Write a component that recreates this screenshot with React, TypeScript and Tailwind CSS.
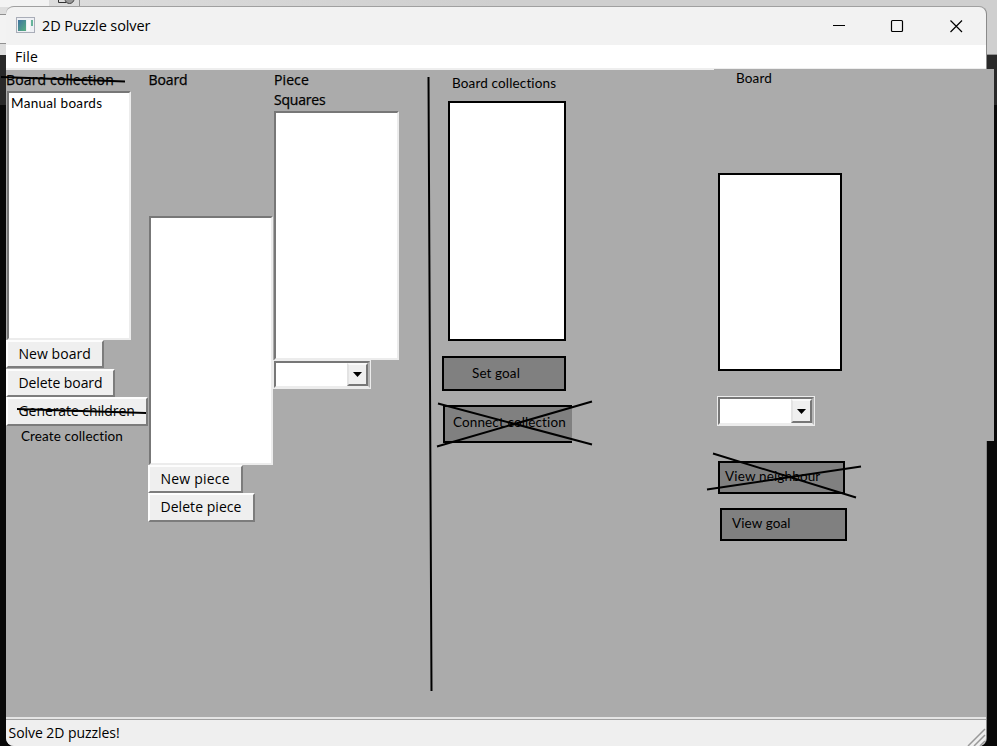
import React from "react";

const UI = "font-['Open_Sans','Noto_Sans',sans-serif] text-[14px] leading-5 whitespace-nowrap text-black";
const HEAD = "font-['Open_Sans','Noto_Sans',sans-serif] text-[14px] leading-5 whitespace-nowrap text-black [-webkit-text-stroke:0.25px_#000]";
const NOTE = "font-['Lato','Noto_Sans',sans-serif] text-[13.5px] leading-5 whitespace-nowrap text-black";

function ListBox({ size, children }: { size: string; children?: React.ReactNode }) {
  return (
    <div className={`border-2 border-t-[#777777] border-l-[#777777] border-r-[#ececec] border-b-[#ececec] bg-white ${size}`}>
      {children}
    </div>
  );
}

function Button({ size, children }: { size: string; children: React.ReactNode }) {
  return (
    <button className={`flex items-center border-2 border-t-[#fdfdfd] border-l-[#fdfdfd] border-r-[#7c7c7c] border-b-[#7c7c7c] bg-[#efefef] pb-px pl-[10.5px] ${UI} ${size}`}>
      {children}
    </button>
  );
}

function Combo({ size }: { size: string }) {
  return (
    <div className={`border border-[#ececec] ${size}`}>
      <div className="flex h-full justify-end border-2 border-t-[#777777] border-l-[#777777] border-r-[#b5b5b5] border-b-[#ececec] bg-white">
        <div className="flex w-[21px] items-center justify-center border-2 border-t-[#f9f9f9] border-l-[#e3e3e3] border-r-[#777777] border-b-[#777777] bg-[#efefef]">
          <svg width="9" height="5" viewBox="0 0 9 5"><path d="M0 0h9L4.5 5z" fill="#000" /></svg>
        </div>
      </div>
    </div>
  );
}

export default function App() {
  return (
    <div className="relative h-[746px] w-[997px] overflow-hidden bg-[#080808]">
      <div className="absolute inset-x-0 top-0 h-[55px] bg-linear-to-r from-[#dedede] via-[#cfcfcf] to-[#cfcfcf]" />
      <div className="absolute inset-x-0 top-[55px] h-[50px] bg-[#292929]" />
      <svg className="absolute top-0 left-0" width="997" height="56">
        <path d="M0 0h49v7H0zM0 15h6v28H0z" fill="#f3f3f3" />
        <path d="M0 14.500h6M0 43.500h6M79.500 0v7" stroke="#909090" />
        <path d="M58.500 0v2.500h8" fill="none" stroke="#333" />
        <circle cx="69.500" cy="-1" r="4.500" fill="#999" stroke="#444" />
        <path d="M986 54.500h11" stroke="#929292" />
      </svg>

      <main className="absolute top-[6px] left-[6px] flex h-[740px] w-[981px] flex-col overflow-hidden rounded-[8px] border-t border-r border-t-[#a0a0a0] border-r-[#8a8a8a] bg-[#ababab]">
        <header className="flex h-[38px] shrink-0 items-center bg-[#f2f2f2] pl-[10px]">
          <svg className="-mt-[2px]" width="19" height="16" viewBox="0 0 19 16">
            <rect x=".5" y=".5" width="18" height="15" fill="#eef0f4" stroke="#a9adb8" />
            <defs>
              <linearGradient id="tile" x1="0" y1="0" x2="1" y2="1">
                <stop stopColor="#3f72a0" /><stop offset="1" stopColor="#58b080" />
              </linearGradient>
            </defs>
            <rect x="2" y="3" width="8" height="11" fill="url(#tile)" />
            <rect x="11" y="3" width="3" height="11" fill="#fafafa" />
            <rect x="15" y="3" width="2" height="6" fill="#66b49a" />
          </svg>
          <h1 className="pl-[7px] font-['Open_Sans','Noto_Sans',sans-serif] text-[14.5px] leading-5 tracking-[-0.1px]">2D Puzzle solver</h1>
          <svg className="mr-[6px] ml-auto" width="153" height="38" viewBox="0 0 153 38" fill="none" stroke="#000">
            <path d="M6 18.500h12" />
            <rect x="64.500" y="13.500" width="11" height="11" rx="1" strokeWidth="1.200" />
            <path d="M123.500 13.500l11.500 11.500M135 13.500l-11.500 11.500" strokeWidth="1.200" />
          </svg>
        </header>
        <nav className={`flex h-[25px] shrink-0 items-center border-b-2 border-[#eeeeee] bg-white pt-px pl-[9px] tracking-[0.2px] ${UI}`}>File</nav>

        <div className="flex h-[647px] shrink-0">
          <section className="w-[142px] shrink-0">
            <h2 className={`h-[21px] tracking-[0.15px] ${HEAD}`}>Board collection</h2>
            <ListBox size="ml-px h-[249px] w-[124px]">
              <div className={`pl-[2px] tracking-[0.3px] ${NOTE}`}>Manual boards</div>
            </ListBox>
            <Button size="h-[28px] w-[98px] tracking-[0.05px]">New board</Button>
            <Button size="mt-px h-[28px] w-[109px] tracking-[-0.08px]">Delete board</Button>
            <Button size="h-[29px] w-[142px] tracking-[-0.08px]">Generate children</Button>
            <div className={`pl-[15px] tracking-[0.12px] ${NOTE}`}>Create collection</div>
          </section>
          <section className="w-[126px] shrink-0">
            <h2 className={`h-[146px] pl-[0.5px] tracking-[-0.1px] ${HEAD}`}>Board</h2>
            <ListBox size="ml-px h-[249px] w-[124px]" />
            <Button size="h-[28px] w-[95px] tracking-[0.2px]">New piece</Button>
            <Button size="h-[29px] w-[107px] tracking-[0.05px]">Delete piece</Button>
          </section>
          <section className="w-[168px] shrink-0">
            <h2 className={`h-[20px] tracking-[0.1px] ${HEAD}`}>Piece</h2>
            <h3 className={`h-[21px] tracking-[-0.2px] ${HEAD}`}>Squares</h3>
            <ListBox size="h-[249px] w-[125px]" />
            <Combo size="-ml-px h-[29px] w-[98px]" />
          </section>
          <section className="w-[276px] shrink-0 pt-[3px]">
            <h2 className={`h-[28px] pl-[10px] tracking-[0.15px] ${NOTE}`}>Board collections</h2>
            <div className="ml-[6px] h-[240px] w-[118px] border-2 border-black bg-white" />
            <button className={`mt-[15px] flex h-[35px] w-[124px] items-center border-2 border-black bg-[#808080] pb-px pl-[28px] tracking-[0.1px] ${NOTE}`}>Set goal</button>
            <button className={`mt-[14px] ml-px flex h-[38px] w-[129px] items-center border-y-2 border-l-2 border-black bg-[#808080] pb-[5px] pl-2 tracking-[0.12px] ${NOTE}`}>Connect collection</button>
          </section>
          <section className="w-[180px] shrink-0">
            <h2 className={`-mt-[2px] h-[105px] pl-[18px] tracking-[0.15px] ${NOTE}`}>Board</h2>
            <div className="h-[198px] w-[124px] border-2 border-black bg-white" />
            <Combo size="-ml-px mt-[25px] h-[30px] w-[98px]" />
            <button className={`mt-[35px] flex h-[33px] w-[127px] items-center border-2 border-black bg-[#808080] pb-[4px] pl-[5px] tracking-[0.15px] ${NOTE}`}>View neighbour</button>
            <button className={`mt-[14px] ml-[2px] flex h-[33px] w-[127px] items-center border-2 border-black bg-[#808080] pb-[4px] pl-[10px] tracking-[0.1px] ${NOTE}`}>View goal</button>
          </section>
        </div>

        <footer className={`relative h-[29px] shrink-0 border-t-2 border-[#e4e4e4] bg-[#efefef] tracking-[-0.05px] ${UI}`}>
          <div className="border-t border-[#a0a0a0] pt-[3px] pl-[2.5px]">Solve 2D puzzles!</div>
          <svg className="absolute right-0 bottom-0" width="20" height="20" stroke="#999" strokeWidth="1.500">
            <path d="M2 20L19 3M8 20L19 9M14 20L19 15" />
          </svg>
        </footer>
      </main>

      <div className="absolute top-[69px] left-[714px] h-px w-[280px] bg-[#ababab]" />
      <div className="absolute top-[69px] left-[985px] h-[372px] w-[9px] bg-[#ababab]" />
      <svg className="pointer-events-none absolute top-0 left-0" width="997" height="746" fill="none" stroke="#000" strokeWidth="2">
        <path d="M1 77L125 81.500M17 409L146 413M428.500 77L431.500 691" />
        <path d="M438 403.500L592 444.500M437 446.500L592 401.500M713 453.500L856 497.500M707 489.500L861 466.500" />
      </svg>
    </div>
  );
}
